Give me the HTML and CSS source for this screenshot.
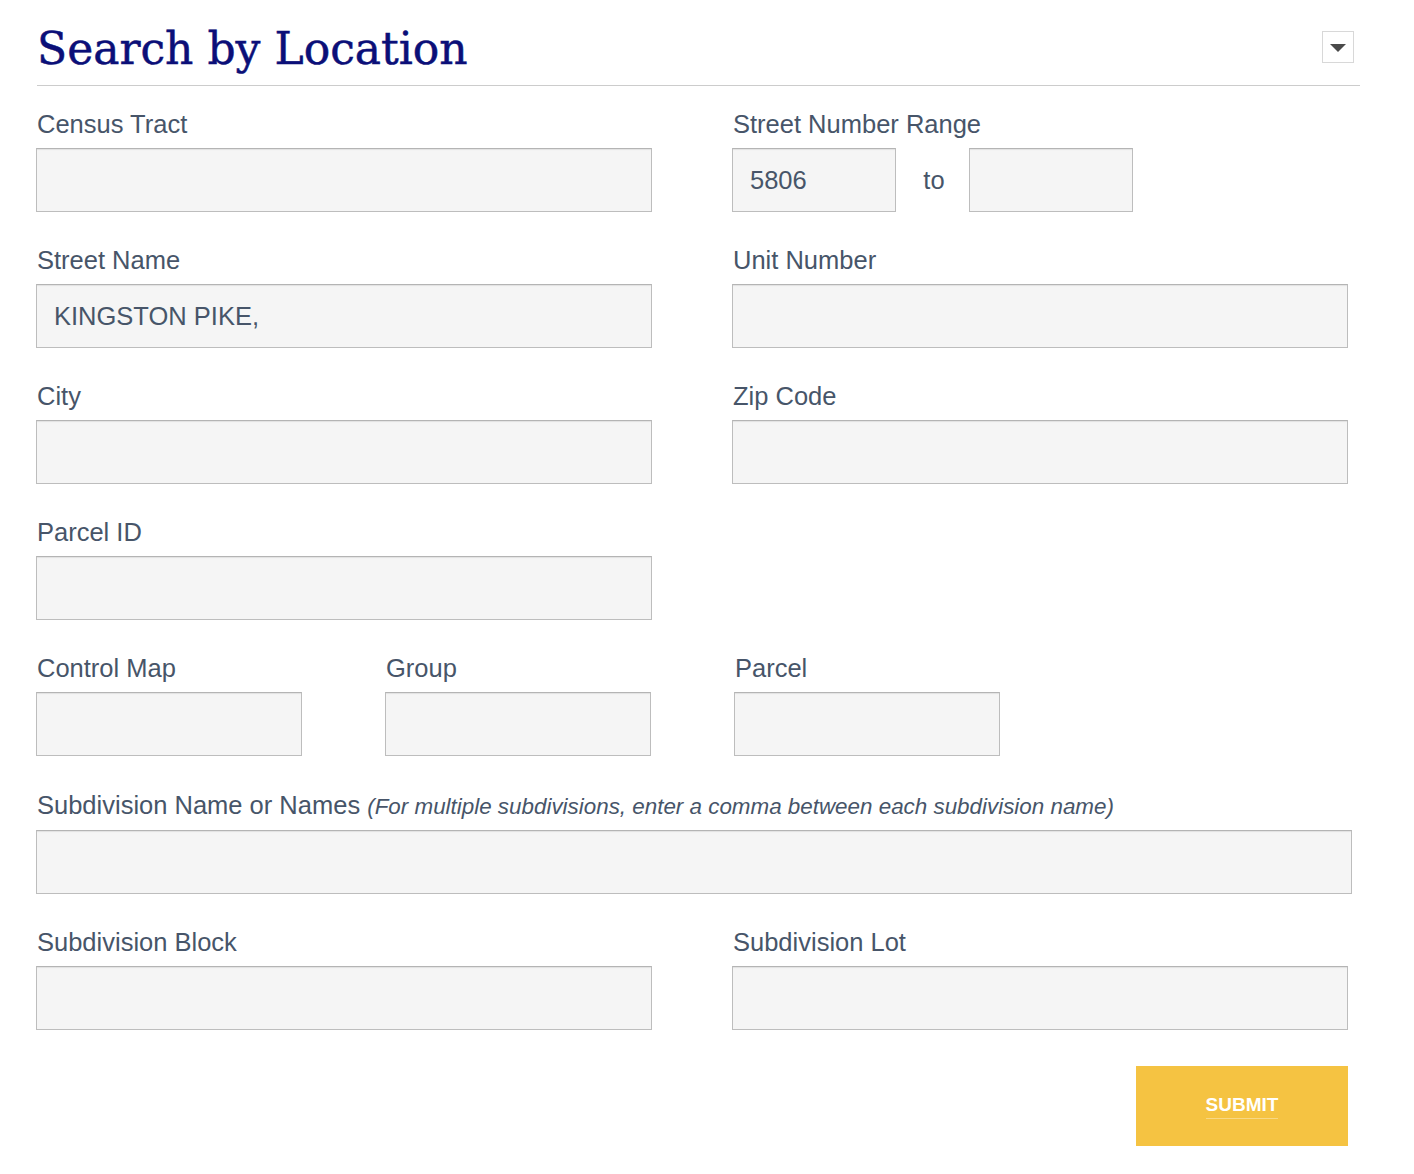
FILE: index.html
```html
<!DOCTYPE html>
<html lang="en">
<head>
<meta charset="utf-8">
<title>Search by Location</title>
<link rel="stylesheet" href="styles.css">
</head>
<body>
<section class="panel">
  <header class="panel-head">
    <h1 class="panel-title">Search by Location</h1>
    <button class="toggle" type="button" aria-label="Collapse">
      <svg width="16" height="8" viewBox="0 0 16 8"><path d="M0 0 H16 L8 8 Z" fill="#4a4a4a"/></svg>
    </button>
  </header>

  <form class="form">
    <div class="grid-2">
      <div class="field">
        <label class="label">Census Tract</label>
        <input class="input" type="text">
      </div>
      <div class="field">
        <label class="label">Street Number Range</label>
        <div class="range">
          <input class="input input-sm" type="text" value="5806">
          <span class="range-to">to</span>
          <input class="input input-sm" type="text">
        </div>
      </div>

      <div class="field">
        <label class="label">Street Name</label>
        <input class="input" type="text" value="KINGSTON PIKE,">
      </div>
      <div class="field">
        <label class="label">Unit Number</label>
        <input class="input" type="text">
      </div>

      <div class="field">
        <label class="label">City</label>
        <input class="input" type="text">
      </div>
      <div class="field">
        <label class="label">Zip Code</label>
        <input class="input" type="text">
      </div>

      <div class="field">
        <label class="label">Parcel ID</label>
        <input class="input" type="text">
      </div>
      <div class="field"></div>
    </div>

    <div class="grid-3">
      <div class="field">
        <label class="label">Control Map</label>
        <input class="input" type="text">
      </div>
      <div class="field">
        <label class="label">Group</label>
        <input class="input" type="text">
      </div>
      <div class="field">
        <label class="label">Parcel</label>
        <input class="input" type="text">
      </div>
    </div>

    <div class="field field-wide">
      <label class="label">Subdivision Name or Names <em class="note">(For multiple subdivisions, enter a comma between each subdivision name)</em></label>
      <input class="input input-wide" type="text">
    </div>

    <div class="grid-2 grid-last">
      <div class="field">
        <label class="label">Subdivision Block</label>
        <input class="input" type="text">
      </div>
      <div class="field">
        <label class="label">Subdivision Lot</label>
        <input class="input" type="text">
      </div>
    </div>

    <div class="actions">
      <button class="submit" type="button"><span>SUBMIT</span></button>
    </div>
  </form>
</section>
</body>
</html>
```

FILE: styles.css
```css
* { box-sizing: border-box; }

html, body {
  margin: 0;
  padding: 0;
  background: #ffffff;
}

body {
  font-family: "Liberation Sans", Arial, Helvetica, sans-serif;
  color: #475569;
}

.panel {
  width: 1360px;
  padding-left: 36px;
  padding-top: 18px;
}

.panel-head {
  display: flex;
  align-items: flex-start;
  justify-content: space-between;
  border-bottom: 1px solid #cccccc;
  height: 68px;
  margin-left: 1px;
}

.panel-title {
  margin: 0;
  font-family: "DejaVu Serif", "Liberation Serif", serif;
  font-weight: normal;
  font-size: 44px;
  line-height: 62px;
  color: #0b0f78;
  letter-spacing: 0;
  -webkit-text-stroke: 0.5px #0b0f78;
}

.toggle {
  width: 32px;
  height: 32px;
  margin-top: 13px;
  margin-right: 6px;
  padding: 0;
  border: 1px solid #d8d8d8;
  background: #ffffff;
  display: flex;
  align-items: center;
  justify-content: center;
  cursor: pointer;
}

.toggle svg { display: block; margin-top: 1px; }

.form {
  padding-top: 22px;
}

.grid-2 {
  display: grid;
  grid-template-columns: 616px 616px;
  column-gap: 80px;
  row-gap: 32px;
}

.grid-3 {
  display: grid;
  grid-template-columns: 266px 266px 266px;
  column-gap: 83px;
  margin-top: 32px;
}

.field {
  display: flex;
  flex-direction: column;
}

.label {
  display: block;
  font-size: 25.5px;
  line-height: 32px;
  height: 32px;
  margin-left: 1px;
  margin-bottom: 8px;
  color: #475569;
  white-space: nowrap;
}

.note {
  font-size: 22.4px;
  font-style: italic;
}

.input {
  display: block;
  width: 100%;
  height: 64px;
  margin: 0;
  padding: 0 17px;
  border: 1px solid #bdbdbd;
  border-top-color: #b4b4b4;
  box-shadow: inset 0 2px 1px -1px #e2e2e2;
  background: #f5f5f5;
  font-family: "Liberation Sans", Arial, Helvetica, sans-serif;
  font-size: 25.5px;
  color: #475569;
  border-radius: 0;
  outline: none;
}

.range {
  display: flex;
  align-items: center;
}

.input-sm {
  width: 164px;
}

.range-to {
  width: 73px;
  text-align: center;
  font-size: 25.5px;
  color: #475569;
  padding-left: 3px;
}

.field-wide {
  margin-top: 33px;
}

.field-wide .label { margin-bottom: 9px; }

.input-wide {
  width: 1316px;
}

.grid-last { margin-top: 32px; }

.actions {
  display: flex;
  justify-content: flex-end;
  width: 1312px;
  margin-top: 36px;
}

.submit {
  width: 212px;
  height: 80px;
  border: 0;
  background: #f5c342;
  color: #ffffff;
  font-family: "Liberation Sans", Arial, Helvetica, sans-serif;
  font-weight: bold;
  font-size: 19px;
  padding: 0;
  cursor: pointer;
}

.submit span {
  display: inline-block;
  padding-bottom: 2px;
  border-bottom: 1px solid rgba(255, 255, 255, 0.35);
  line-height: 22px;
}
```
